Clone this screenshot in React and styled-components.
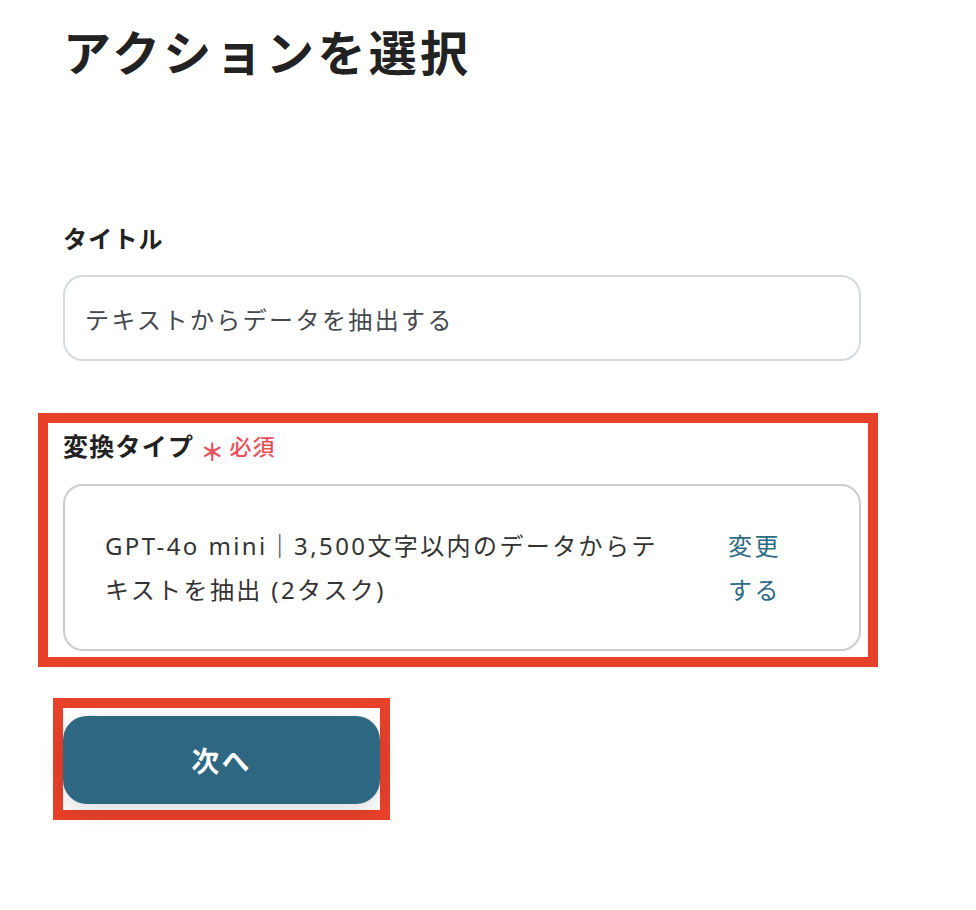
import React from "react";
import styled, { createGlobalStyle } from "styled-components";

const GlobalStyle = createGlobalStyle`
  body {
    margin: 0;
    background: #ffffff;
    font-family: "Noto Sans", "Noto Sans CJK JP", sans-serif;
    color: #222222;
  }
`;

const Page = styled.div`
  width: 798px;
  padding: 17px 0 60px 63px;
`;

const Title = styled.h1`
  margin: 0;
  font-size: 48px;
  line-height: 72px;
  font-weight: 700;
  letter-spacing: 0.07em;
  color: #222222;
`;

const Field = styled.div`
  margin-top: ${({ $top }) => $top || 0}px;
`;

const Label = styled.div`
  display: flex;
  align-items: center;
  height: 36px;
  font-size: ${({ $size }) => $size || 24}px;
  font-weight: 700;
  letter-spacing: 0.05em;
  color: #222222;
`;

const Asterisk = styled.span`
  margin-left: 6px;
  font-family: "Noto Sans CJK JP", sans-serif;
  font-size: 24px;
  line-height: 1;
  font-weight: 700;
  color: #e8505b;
  transform: translateY(6px);
`;

const Required = styled.span`
  margin-left: 4px;
  font-size: 22px;
  font-weight: 500;
  letter-spacing: 0.05em;
  color: #e8505b;
`;

const TextBox = styled.div`
  margin-top: 20px;
  height: 86px;
  box-sizing: border-box;
  display: flex;
  align-items: center;
  padding: 0 20px;
  border: 2px solid #d5dade;
  border-radius: 20px;
  font-size: 24px;
  letter-spacing: 0.1em;
  color: #45494f;
`;

const Highlight = styled.div`
  margin: 52px -17px 0 -25px;
  padding: 4px 7px 6px 15px;
  border: 10px solid #e8412a;
`;

const SelectBox = styled.div`
  margin-top: 21px;
  height: 167px;
  box-sizing: border-box;
  display: flex;
  align-items: center;
  padding: 0 71px 0 40px;
  border: 2px solid #cccccc;
  border-radius: 20px;
  font-size: 24px;
  line-height: 44px;
  letter-spacing: 0.1em;
`;

const SelectText = styled.div`
  flex: 1;
  color: #333333;
`;

const ChangeLink = styled.a`
  width: 60px;
  margin-left: 58px;
  color: #2f6b85;
  text-decoration: none;
  cursor: pointer;
`;

const ButtonHighlight = styled.div`
  width: fit-content;
  margin: 31px 0 0 -10px;
  padding: 8px 0 6px;
  border: 10px solid #e8412a;
`;

const NextButton = styled.button`
  display: block;
  width: 317px;
  height: 88px;
  border: none;
  border-radius: 24px;
  background: #2e6781;
  color: #ffffff;
  font-family: inherit;
  font-size: 28px;
  font-weight: 700;
  letter-spacing: 0.08em;
  box-shadow: 0 6px 22px rgba(0, 0, 0, 0.14);
  cursor: pointer;
`;

const App = () => {
  return (
    <>
      <GlobalStyle />
      <Page>
        <Title>アクションを選択</Title>

        <Field $top={130}>
          <Label>タイトル</Label>
          <TextBox>テキストからデータを抽出する</TextBox>
        </Field>

        <Highlight>
          <Label $size={25}>
            変換タイプ
            <Asterisk>＊</Asterisk>
            <Required>必須</Required>
          </Label>
          <SelectBox>
            <SelectText>
              GPT-4o mini｜3,500文字以内のデータからテキストを抽出 (2タスク)
            </SelectText>
            <ChangeLink>変更する</ChangeLink>
          </SelectBox>
        </Highlight>

        <ButtonHighlight>
          <NextButton>次へ</NextButton>
        </ButtonHighlight>
      </Page>
    </>
  );
};

export default App;
